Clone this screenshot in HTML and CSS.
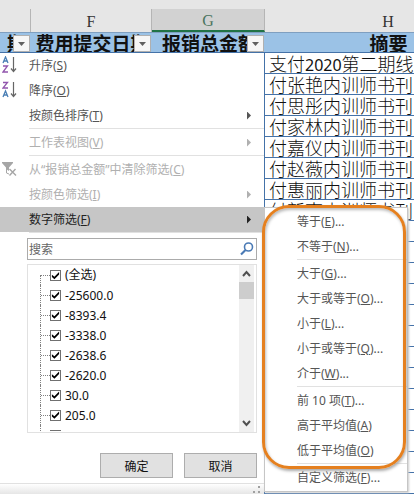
FILE: index.html
```html
<!DOCTYPE html>
<html lang="zh-CN">
	<head>
		<meta charset="UTF-8" />
		<meta name="viewport" content="width=device-width, initial-scale=1.0" />
		<title>数字筛选</title>
		<link rel="stylesheet" href="styles.css">
	</head>
	<body>
		<div class="sheet">
			<div class="gap"></div>
			<table class="grid">
				<colgroup>
					<col class="colE" />
					<col class="colF" />
					<col class="colG" />
					<col class="colH" />
				</colgroup>
				<thead>
					<tr class="letters">
						<th></th>
						<th>F</th>
						<th class="selected">G</th>
						<th>H</th>
					</tr>
					<tr class="titles">
						<th><div class="title">期<button class="drop" aria-label="筛选"></button></div></th>
						<th><div class="title">费用提交日期<button class="drop" aria-label="筛选"></button></div></th>
						<th><div class="title">报销总金额<button class="drop" aria-label="筛选"></button></div></th>
						<th>摘要</th>
					</tr>
				</thead>
				<tbody id="rows"></tbody>
			</table>

			<div class="menu">
				<button class="item">
					<svg class="icon" width="16" height="18" viewBox="0 0 16 18" fill="none">
						<path d="M1 7L3.5 1L6 7M2 5H5" stroke="#4a7fb5" stroke-width="1.3" />
						<path d="M1 10H5.5L1 16H6" stroke="#9155ad" stroke-width="1.3" />
						<path d="M11.5 1V15M9 12.5L11.5 15.5L14 12.5" stroke="#666" stroke-width="1.2" />
					</svg>
					<span>升序(<u>S</u>)</span>
				</button>
				<button class="item">
					<svg class="icon" width="16" height="18" viewBox="0 0 16 18" fill="none">
						<path d="M1 1.5H5.5L1 7H6" stroke="#9155ad" stroke-width="1.3" />
						<path d="M1 16L3.5 10L6 16M2 14H5" stroke="#4a7fb5" stroke-width="1.3" />
						<path d="M11.5 1V15M9 12.5L11.5 15.5L14 12.5" stroke="#666" stroke-width="1.2" />
					</svg>
					<span>降序(<u>O</u>)</span>
				</button>
				<button class="item more"><span>按颜色排序(<u>T</u>)</span></button>
				<div class="line"></div>
				<button class="item more" disabled><span>工作表视图(<u>V</u>)</span></button>
				<div class="line"></div>
				<button class="item" disabled>
					<svg class="icon" width="16" height="18" viewBox="0 0 16 18" fill="none">
						<path d="M0 2H11V3L7 7.500V11L4 9V7.500L0 3Z" fill="#a6a6a6" />
						<path d="M4.500 8V13L7 14" stroke="#a6a6a6" />
						<path d="M7.500 9L14 15.500M13.500 9L7.500 15.500" stroke="#a6a6a6" stroke-width="1.4" />
					</svg>
					<span>从“报销总金额”中清除筛选(<u>C</u>)</span>
				</button>
				<button class="item more" disabled><span>按颜色筛选(<u>I</u>)</span></button>
				<button class="item more active"><span>数字筛选(<u>F</u>)</span></button>
				<div class="line"></div>

				<div class="panel">
					<div class="search">
						<input type="text" placeholder="搜索" aria-label="搜索" />
						<svg width="14" height="14" viewBox="0 0 14 14" fill="none">
							<circle cx="8.500" cy="5" r="4" stroke="#4a7ab5" stroke-width="1.600" />
							<path d="M5.500 8L1 12.500" stroke="#4a7ab5" stroke-width="2.200" />
						</svg>
					</div>
					<div class="list">
						<div class="tree" id="tree"></div>
						<div class="scroll">
							<svg width="15" height="17" viewBox="0 0 15 17" fill="none">
								<path d="M4 11L7.500 7L11 11" stroke="#505050" stroke-width="2" />
							</svg>
							<div class="thumb"></div>
							<svg class="down" width="15" height="17" viewBox="0 0 15 17" fill="none">
								<path d="M4 6L7.500 10L11 6" stroke="#505050" stroke-width="2" />
							</svg>
						</div>
					</div>
					<div class="buttons">
						<button class="btn">确定</button>
						<button class="btn">取消</button>
					</div>
				</div>
				<div class="footer">
					<svg width="7" height="7" viewBox="0 0 7 7" fill="#a0a0a0">
						<path d="M5 0h2v2h-2zM5 5h2v2h-2zM0 5h2v2h-2z" />
					</svg>
				</div>
			</div>

			<div class="submenu">
				<button class="item">等于(<u>E</u>)...</button>
				<button class="item">不等于(<u>N</u>)...</button>
				<div class="line"></div>
				<button class="item">大于(<u>G</u>)...</button>
				<button class="item">大于或等于(<u>O</u>)...</button>
				<button class="item">小于(<u>L</u>)...</button>
				<button class="item">小于或等于(<u>Q</u>)...</button>
				<button class="item">介于(<u>W</u>)...</button>
				<div class="line"></div>
				<button class="item">前 10 项(<u>T</u>)...</button>
				<button class="item">高于平均值(<u>A</u>)</button>
				<button class="item">低于平均值(<u>O</u>)</button>
				<div class="line"></div>
				<button class="item">自定义筛选(<u>F</u>)...</button>
				<div class="mark"></div>
			</div>
		</div>

		<script>
			let texts = [
				"支付<span class='num'>2020</span>第二期线上",
				"付张艳内训师书刊",
				"付思彤内训师书刊",
				"付家林内训师书刊",
				"付嘉仪内训师书刊",
				"付赵薇内训师书刊",
				"付惠丽内训师书刊",
				"付新南内训师书刊",
			];
			let values = ["(全选)", "-25600.0", "-8393.4", "-3338.0", "-2638.6", "-2620.0", "30.0", "205.0", "250.0"];

			let html = "";
			for (let i = 0; i < 21; i++) {
				html += "<tr><td></td><td></td><td></td><td>" + (texts[i] || "") + "</td></tr>";
			}
			document.getElementById("rows").innerHTML = html;

			html = "";
			values.forEach((v) => {
				html += '<label class="node"><input type="checkbox" checked />' + v + "</label>";
			});
			document.getElementById("tree").innerHTML = html;
		</script>
	</body>
</html>
```
FILE: styles.css
```css
* {
	padding: 0;
	margin: 0;
	box-sizing: border-box;
}
body {
	font-family: "Noto Sans", "Noto Sans CJK SC", sans-serif;
	font-size: 12px;
	color: #555;
	background: #fff;
	overflow: hidden;
}
button,
input {
	font: inherit;
	color: inherit;
}
u {
	text-underline-offset: 1px;
}
.sheet {
	position: relative;
	overflow: hidden;
}
.gap {
	height: 9px;
	background: #e6e6e6;
}

/* worksheet */
.grid {
	width: 512px;
	table-layout: fixed;
	border-collapse: separate;
	border-spacing: 0;
}
.colE {
	width: 31px;
}
.colF {
	width: 121px;
}
.colG {
	width: 113px;
}
.letters th {
	height: 23px;
	padding-top: 3px;
	background: #e6e6e6;
	border-right: 1px solid #b5b5b5;
	font: 16px "Liberation Serif", serif;
	color: #333;
}
.letters .selected {
	background: #d2d2d2;
	border-bottom: 2px solid #217346;
	color: #4a7560;
}
.titles th {
	height: 21px;
	background: #9bc2e6;
	border-top: 1px solid #7f9fc0;
	border-bottom: 1px solid #4472a8;
	font-family: "Noto Sans CJK SC", sans-serif;
	font-size: 19px;
	line-height: 19px;
	color: #111;
	white-space: nowrap;
	overflow: hidden;
}
.title {
	display: flex;
	justify-content: center;
	position: relative;
	height: 19px;
	padding-left: 2px;
	overflow: hidden;
}
.drop {
	position: absolute;
	right: 1px;
	top: 2px;
	width: 17px;
	height: 17px;
	border: 1px solid #b0b0b0;
	background: #f6f6f6;
}
.drop::after {
	content: "";
	display: block;
	margin: 1px auto 0;
	width: 7px;
	height: 4px;
	background: #606060;
	clip-path: polygon(0 0, 100% 0, 50% 100%);
}
.grid td {
	height: 21px;
	border-right: 1px solid #4472a8;
	border-bottom: 1px solid #4472a8;
	padding-left: 4px;
	font-family: "Noto Sans CJK SC", sans-serif;
	font-size: 18px;
	font-weight: 300;
	line-height: 20px;
	color: #111;
	white-space: nowrap;
	overflow: hidden;
}
.num {
	font-family: "Noto Sans", sans-serif;
	font-size: 16px;
	font-weight: 400;
	line-height: 16px;
}

/* filter menu */
.menu {
	position: absolute;
	left: 0;
	top: 53px;
	width: 264px;
	background: #fff;
	border-bottom: 1px solid #a6a6a6;
}
.item {
	display: flex;
	align-items: center;
	position: relative;
	width: 100%;
	height: 25px;
	padding-left: 29px;
	border: none;
	background: none;
	line-height: 16px;
	white-space: nowrap;
}
.item:disabled {
	color: #b0b0b0;
}
.item.active {
	background: #c6c6c6;
	color: #222;
}
.icon {
	position: absolute;
	left: 2px;
	top: 3px;
}
.more::after {
	content: "";
	margin-left: auto;
	margin-right: 13px;
	width: 4px;
	height: 8px;
	background: currentColor;
	clip-path: polygon(0 0, 100% 50%, 0 100%);
}
.line {
	height: 2px;
	margin-left: 29px;
	border-top: 1px solid #e1e1e1;
}
.panel {
	padding: 4px 7px 5px 27px;
}
.search {
	display: flex;
	align-items: center;
	height: 22px;
	padding-right: 2px;
	border: 1px solid #ababab;
}
.search input {
	flex: 1;
	min-width: 0;
	padding-left: 1px;
	border: none;
	outline: none;
}
.search input::placeholder {
	color: #666;
}
.list {
	display: flex;
	height: 169px;
	margin-top: 4px;
	padding-right: 2px;
	border: 1px solid #e1e1e1;
}
.tree {
	flex: 1;
	height: 166px;
	overflow: hidden;
	color: #111;
}
.node {
	display: flex;
	align-items: center;
	gap: 4px;
	height: 20px;
	margin-left: 12px;
	border-left: 1px dotted #808080;
}
.node:first-child {
	height: 10px;
	margin-top: 10px;
	line-height: 0;
	align-items: flex-start;
}
.node::before {
	content: "";
	width: 9px;
	margin-right: -4px;
	border-top: 1px dotted #808080;
}
.node input {
	appearance: none;
	width: 11px;
	height: 11px;
	border: 1px solid #707070;
	background: #fff;
}
.node:first-child input {
	margin-top: -5px;
}
.node input:checked::before {
	content: "";
	display: block;
	width: 9px;
	height: 9px;
	background: #000;
	clip-path: polygon(10% 42%, 38% 65%, 90% 12%, 90% 40%, 38% 92%, 10% 68%);
}
.scroll {
	display: flex;
	flex-direction: column;
	width: 15px;
	background: #f0f0f0;
}
.thumb {
	height: 17px;
	background: #cdcdcd;
}
.down {
	margin-top: auto;
}
.buttons {
	display: flex;
	justify-content: flex-end;
	gap: 11px;
	margin-top: 20px;
}
.btn {
	width: 73px;
	height: 25px;
	border: 1px solid #adadad;
	background: #e1e1e1;
	color: #111;
}
.footer {
	display: flex;
	justify-content: flex-end;
	align-items: center;
	height: 11px;
	padding-right: 4px;
	border-top: 1px solid #e1e1e1;
	background: linear-gradient(#fff, #e6e6e6);
}

/* submenu */
.submenu {
	position: absolute;
	left: 264px;
	top: 207px;
	width: 144px;
	padding: 1px 0;
	border: 1px solid #c6c6c6;
	background: #fff;
	box-shadow: 1px 1px 2px #ccc;
}
.submenu .item {
	padding-left: 32px;
}
.submenu .line {
	margin-left: 32px;
}
.mark {
	position: absolute;
	left: -3px;
	top: -3px;
	width: 144px;
	height: 264px;
	border: 3px solid #e5801f;
	border-radius: 27px;
	box-shadow: 1px 2px 3px #aaa, inset 1px 2px 3px #bbb;
	pointer-events: none;
}
```
